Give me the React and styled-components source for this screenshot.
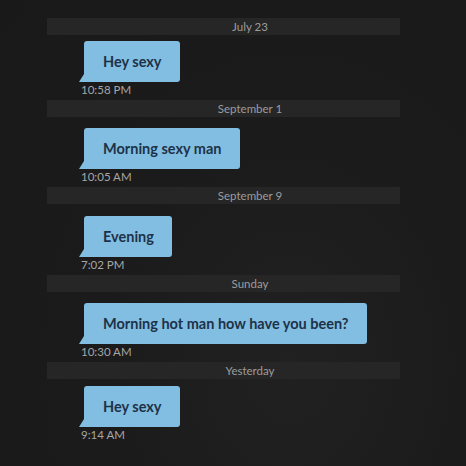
import React from "react";
import styled, { createGlobalStyle } from "styled-components";

const GlobalStyle = createGlobalStyle`
  html, body {
    margin: 0;
    padding: 0;
    background: #1b1b1b;
  }
  body {
    width: 466px;
    height: 466px;
    overflow: hidden;
    font-family: Lato, "Open Sans", sans-serif;
  }
`;

const messages = [
  { date: "July 23", text: "Hey sexy", time: "10:58 PM", lead: 6 },
  { date: "September 1", text: "Morning sexy man", time: "10:05 AM", lead: 11 },
  { date: "September 9", text: "Evening", time: "7:02 PM", lead: 12 },
  { date: "Sunday", text: "Morning hot man how have you been?", time: "10:30 AM", lead: 11 },
  { date: "Yesterday", text: "Hey sexy", time: "9:14 AM", lead: 7 },
];

const Screen = styled.div`
  width: 466px;
  height: 466px;
  box-sizing: border-box;
  padding: 18px 0 0 47px;
  background: radial-gradient(ellipse at 62% 78%, #212121 0%, #1b1b1b 45%, #191919 100%);
`;

const Thread = styled.div`
  display: flex;
  flex-direction: column;
  gap: 2px;
  width: 353px;
`;

const Group = styled.div`
  display: flex;
  flex-direction: column;
`;

const DateBar = styled.div`
  height: 17px;
  line-height: 17px;
  padding-left: 53px;
  background: #262626;
  color: #9c9c9c;
  font-size: 11.5px;
  text-align: center;
`;

const Bubble = styled.div`
  position: relative;
  align-self: flex-start;
  margin: ${(p) => p.lead}px 0 0 37px;
  padding: 10px 18px 10px 19px;
  background: #82bee1;
  border-radius: 3px 3px 3px 0;
  color: #1d3248;
  font-size: 14.5px;
  font-weight: 700;
  line-height: 21px;
  white-space: nowrap;

  &::before {
    content: "";
    position: absolute;
    left: -5px;
    bottom: 0;
    width: 0;
    height: 0;
    border-top: 8px solid transparent;
    border-right: 5px solid #82bee1;
  }
`;

const Time = styled.div`
  margin-left: 34px;
  height: 16px;
  line-height: 16px;
  color: #a6a6a6;
  font-size: 11.5px;
`;

const App = () => {
  return (
    <>
      <GlobalStyle />
      <Screen>
        <Thread>
          {messages.map((m) => (
            <Group key={m.date}>
              <DateBar>{m.date}</DateBar>
              <Bubble lead={m.lead}>{m.text}</Bubble>
              <Time>{m.time}</Time>
            </Group>
          ))}
        </Thread>
      </Screen>
    </>
  );
};

export default App;
